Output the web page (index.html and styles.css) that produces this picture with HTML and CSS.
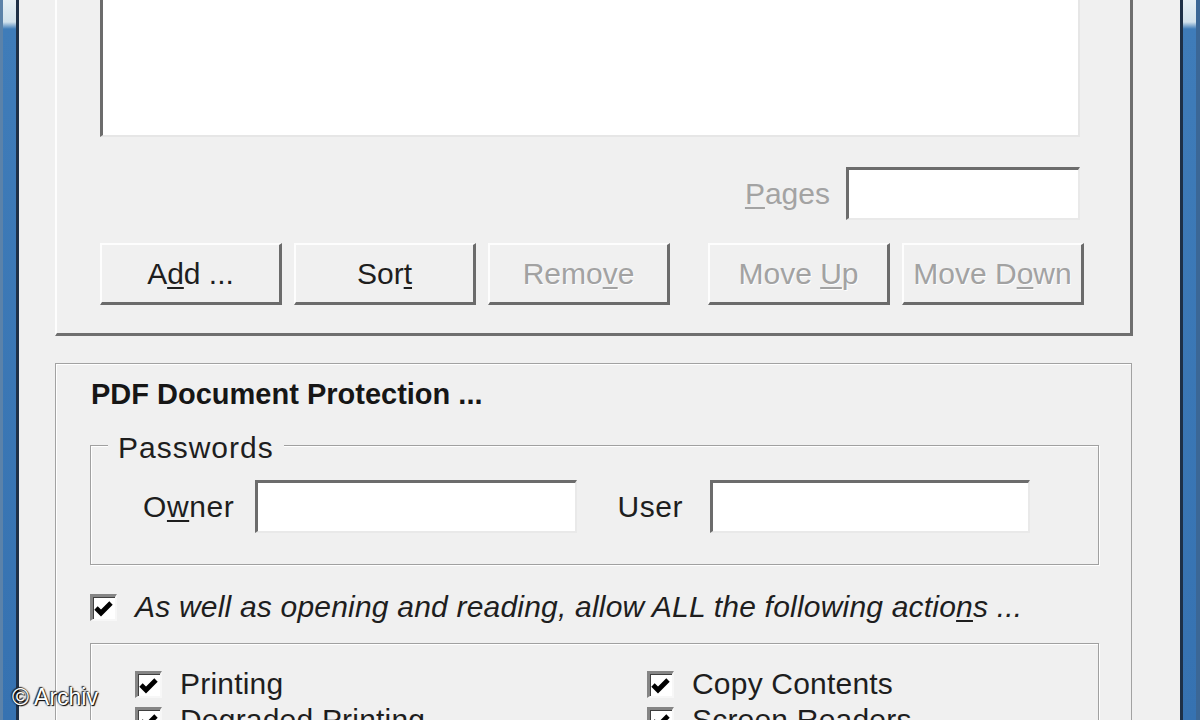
FILE: index.html
```html
<!DOCTYPE html>
<html lang="en">
<head>
<meta charset="utf-8">
<title>PDF Document Protection</title>
<link rel="stylesheet" href="styles.css">
</head>
<body>
<div class="screen">
  <div class="frame frame-left"></div>
  <main class="dialog">
    <section class="files-panel">
      <div class="listbox"></div>
      <div class="pages-row">
        <span class="label is-disabled"><u>P</u>ages</span>
        <input class="field pages-field" type="text" disabled>
      </div>
      <div class="button-row">
        <button class="btn" type="button">A<u>d</u>d ...</button>
        <button class="btn" type="button">Sor<u>t</u></button>
        <button class="btn" type="button" disabled>Remo<u>v</u>e</button>
        <button class="btn btn-gap" type="button" disabled>Move <u>U</u>p</button>
        <button class="btn" type="button" disabled>Move D<u>o</u>wn</button>
      </div>
    </section>

    <section class="protect-panel">
      <h2 class="title">PDF Document Protection ...</h2>
      <fieldset class="group passwords">
        <legend class="legend">Passwords</legend>
        <div class="pw-row">
          <label class="label owner-label">O<u>w</u>ner</label>
          <input class="field owner-field" type="text">
          <label class="label user-label">User</label>
          <input class="field user-field" type="text">
        </div>
      </fieldset>

      <div class="allow-row">
        <span class="checkbox"><svg viewBox="0 0 20 16" width="20" height="16"><polyline points="2,7 7,12 17,2" /></svg></span>
        <span class="allow-text">As well as opening and reading, allow ALL the following actio<u>n</u>s ...</span>
      </div>

      <fieldset class="group perms">
        <div class="perm-grid">
          <div class="perm"><span class="checkbox"><svg viewBox="0 0 20 16" width="20" height="16"><polyline points="2,7 7,12 17,2" /></svg></span><span class="perm-text">Printing</span></div>
          <div class="perm"><span class="checkbox"><svg viewBox="0 0 20 16" width="20" height="16"><polyline points="2,7 7,12 17,2" /></svg></span><span class="perm-text">Copy Contents</span></div>
          <div class="perm"><span class="checkbox"><svg viewBox="0 0 20 16" width="20" height="16"><polyline points="2,7 7,12 17,2" /></svg></span><span class="perm-text">Degraded Printing</span></div>
          <div class="perm"><span class="checkbox"><svg viewBox="0 0 20 16" width="20" height="16"><polyline points="2,7 7,12 17,2" /></svg></span><span class="perm-text">Screen Readers</span></div>
        </div>
      </fieldset>
    </section>
  </main>
  <div class="frame frame-right"></div>
  <div class="watermark">© Archiv</div>
</div>
</body>
</html>
```

FILE: styles.css
```css
* { box-sizing: border-box; }

html, body {
  margin: 0;
  padding: 0;
}

body {
  width: 1200px;
  height: 720px;
  overflow: hidden;
  background: #f0f0f0;
  font-family: "Liberation Sans", Arial, sans-serif;
  font-size: 30px;
  color: #1e1e1e;
}

u {
  text-decoration: underline;
  text-decoration-thickness: 2px;
  text-underline-offset: 3px;
}

.screen {
  position: relative;
  display: flex;
  width: 1200px;
  height: 720px;
  overflow: hidden;
}

/* window frame */
.frame {
  flex: none;
  height: 100%;
  background: linear-gradient(to bottom, #e6eff4 0, #d2e2ec 22px, #3f7cb9 29px, #3672b1 100%);
}
.frame-left {
  width: 19px;
  border-left: 3px solid #5b82a9;
  border-right: 3px solid #1e3047;
}
.frame-right {
  width: 20px;
  border-left: 3px solid #1e3047;
  border-right: 4px solid #3b6796;
}

.dialog {
  flex: none;
  width: 1161px;
  padding-left: 36px;
}

/* top panel */
.files-panel {
  width: 1078px;
  border-left: 2px solid #fdfdfd;
  border-right: 3px solid #6f6f6f;
  border-bottom: 3px solid #6f6f6f;
  padding: 0 50px 28px 43px;
}

.listbox {
  width: 100%;
  height: 137px;
  background: #fff;
  border-left: 3px solid #6c6c6c;
  border-right: 2px solid #e6e6e6;
  border-bottom: 2px solid #e6e6e6;
}

.pages-row {
  display: flex;
  justify-content: flex-end;
  align-items: center;
  gap: 16px;
  margin-top: 30px;
  height: 53px;
}

.label {
  line-height: 34px;
  white-space: nowrap;
}
.is-disabled {
  color: #a3a3a3;
}

.field {
  display: block;
  flex: none;
  height: 53px;
  margin: 0;
  padding: 0;
  background: #fff;
  border-style: solid;
  border-width: 3px 2px 2px 3px;
  border-color: #6c6c6c #e9e9e9 #e9e9e9 #6c6c6c;
  font: inherit;
  outline: none;
}
.pages-field { width: 234px; }
.owner-field { width: 322px; margin-left: 21px; }
.user-field { width: 320px; margin-left: 27px; }

.owner-label, .user-label { letter-spacing: 0.6px; }

.button-row {
  display: flex;
  gap: 12px;
  margin-top: 23px;
}

.btn {
  flex: none;
  width: 182px;
  height: 62px;
  margin: 0;
  padding: 0;
  background: #f0f0f0;
  border-style: solid;
  border-width: 2px 3px 3px 2px;
  border-color: #fdfdfd #6b6b6b #6b6b6b #fdfdfd;
  font: inherit;
  color: #1e1e1e;
  line-height: 34px;
  text-align: center;
  cursor: default;
}
.btn:disabled {
  color: #a2a2a2;
  text-shadow: 1px 1px 0 #fdfdfd;
}
.btn-gap { margin-left: 26px; }

/* bottom panel */
.protect-panel {
  width: 1077px;
  height: 520px;
  margin-top: 27px;
  border: 1px solid #a2a2a2;
  box-shadow: inset 1px 1px 0 #fff;
  padding: 13px 32px 0 34px;
}

.title {
  margin: 0;
  padding-left: 1px;
  font-size: 29px;
  font-weight: bold;
  line-height: 34px;
  color: #161616;
}

.group {
  margin: 15px 0 0;
  padding: 0;
  min-width: 0;
  border: 1px solid #a0a0a0;
  box-shadow: inset 1px 1px 0 #fff, 1px 1px 0 #fff;
}

.legend {
  margin-left: 17px;
  padding: 5px 10px 0;
  line-height: 34px;
  letter-spacing: 1px;
  background: #f0f0f0;
}

.passwords {
  padding-bottom: 31px;
}

.pw-row {
  display: flex;
  align-items: center;
  margin-top: 15px;
  padding-left: 52px;
}
.user-label { margin-left: 40px; }

.allow-row {
  display: flex;
  align-items: center;
  height: 34px;
  margin-top: 25px;
}
.allow-text {
  margin-left: 18px;
  font-style: italic;
  letter-spacing: 0.2px;
  white-space: nowrap;
  line-height: 34px;
}

.checkbox {
  flex: none;
  display: flex;
  align-items: center;
  justify-content: center;
  width: 27px;
  height: 27px;
  background: #fff;
  border-style: solid;
  border-width: 3px 2px 2px 3px;
  border-color: #858585 #f7f7f7 #f7f7f7 #858585;
  box-shadow: inset 1px 1px 0 #404040;
}
.checkbox svg {
  display: block;
  margin-top: 2px;
}
.checkbox polyline {
  fill: none;
  stroke: #000;
  stroke-width: 4.8;
}

.perms {
  margin-top: 19px;
  height: 200px;
  padding: 22px 0 0 44px;
}

.perm-grid {
  display: grid;
  grid-template-columns: 512px 1fr;
  grid-auto-rows: 36px;
}

.perm {
  display: flex;
  align-items: center;
}
.perm-text {
  margin-left: 18px;
  line-height: 36px;
  letter-spacing: 0.2px;
  white-space: nowrap;
}

/* photo credit overlay */
.watermark {
  position: absolute;
  left: 12px;
  top: 683px;
  font-size: 23px;
  line-height: 28px;
  color: #fff;
  text-shadow: 0 0 2px #000, 1px 1px 1px #000, -1px -1px 1px #333;
  white-space: nowrap;
}
```
